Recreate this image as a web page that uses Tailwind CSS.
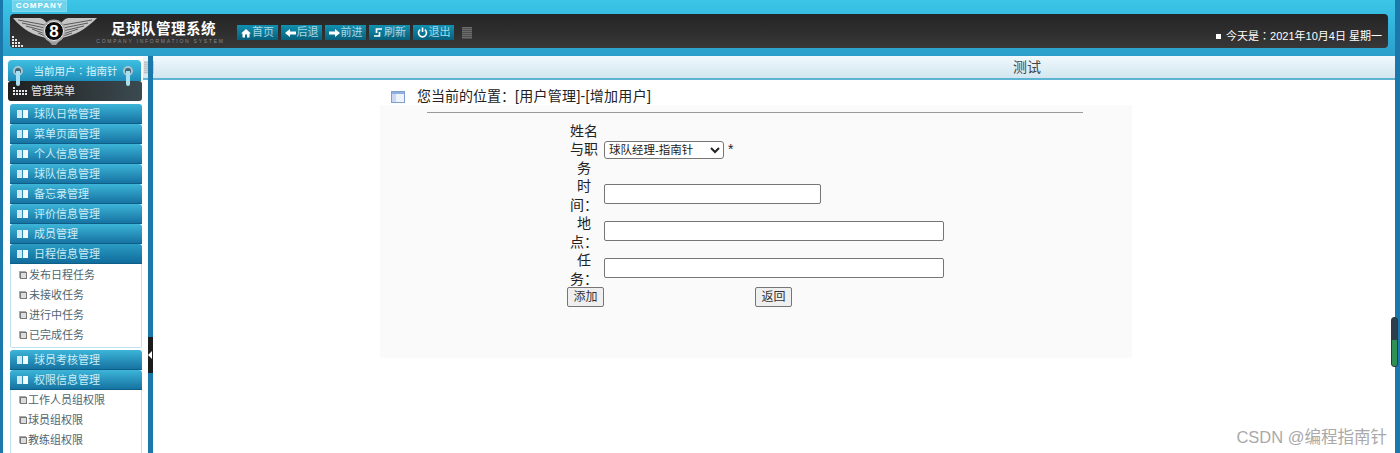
<!DOCTYPE html>
<html lang="zh">
<head>
<meta charset="utf-8">
<script src="https://cdn.jsdelivr.net/npm/@tailwindcss/browser@4"></script>
</head>
<body class="relative h-[453px] w-[1400px] overflow-hidden bg-white font-['Liberation_Sans','Noto_Sans_CJK_SC',sans-serif]">

<!-- Top header -->
<header class="h-[56px] border-l-[3px] border-r-[5px] border-[#1b78ad] bg-gradient-to-b from-[#3cc6e8] to-[#2a9fcb] pl-[7px] pr-[7px]">
  <div class="ml-[2px] flex h-[12px] w-[55px] items-center justify-center border border-[#7fdcf0] bg-[#6ed3ea] text-[8px] font-bold tracking-[1px] text-white">COMPANY</div>
  <div class="mt-[2px] flex h-[34px] items-center rounded-[4px] bg-gradient-to-b from-[#242424] to-[#383838] pr-[6px]">
    <div class="relative h-[34px] w-[88px] shrink-0">
      <svg class="absolute left-[2px] top-0" width="86" height="34" viewBox="0 0 86 34">
        <path d="M1 4 H28 C32 5 35 8 36 12 L35 24 C22 22 10 15 1 4Z" fill="#c4c4c4"/>
        <path d="M85 4 H56 C52 5 49 8 48 12 L49 24 C62 22 74 15 85 4Z" fill="#c4c4c4"/>
        <path d="M6 6 L33 11 M10 9 L33 14 M14 12 L33 17 M20 15 L33 20 M26 19 L33 22 M80 6 L51 11 M76 9 L51 14 M72 12 L51 17 M66 15 L51 20 M60 19 L51 22" stroke="#5a5a5a" stroke-width="1"/>
        <path d="M34 24 H50 L44 31 H40Z" fill="#9a9a9a"/>
        <circle cx="42" cy="17" r="11.5" fill="#a8a8a8"/>
        <circle cx="42" cy="17" r="9.5" fill="#0c0c0c" stroke="#eee" stroke-width="1"/>
        <text x="42" y="23" text-anchor="middle" font-family="Liberation Sans" font-size="17" font-weight="700" fill="#fff">8</text>
      </svg>
      <svg class="absolute left-[2px] top-[22px]" width="11" height="11" viewBox="0 0 11 11" fill="#e8e8e8">
        <rect x="0" y="0" width="2" height="2"/><rect x="0" y="3" width="2" height="2"/><rect x="3" y="3" width="2" height="2"/><rect x="0" y="6" width="2" height="2"/><rect x="3" y="6" width="2" height="2"/><rect x="6" y="6" width="2" height="2"/><rect x="0" y="9" width="2" height="2"/><rect x="3" y="9" width="2" height="2"/><rect x="6" y="9" width="2" height="2"/><rect x="9" y="9" width="2" height="2"/>
      </svg>
    </div>
    <div class="flex w-[125px] shrink-0 flex-col items-center pt-[2px]">
      <div class="ml-[6px] text-[14.5px] font-bold leading-[18px] tracking-[0.5px] text-white">足球队管理系统</div>
      <div class="whitespace-nowrap text-[5px] leading-[7px] tracking-[1.75px] text-[#8a8a8a]">COMPANY INFORMATION SYSTEM</div>
    </div>
    <nav class="ml-[14px] mt-[3px] flex items-center gap-[3px] text-[11px] text-[#a9d9e6]">
      <a class="flex h-[15px] w-[41px] items-center justify-center gap-[1px] bg-gradient-to-b from-[#1290b0] to-[#07617d]">
        <svg width="10" height="10" viewBox="0 0 10 10" fill="#fff"><path d="M5 1 L10 5.5 H8.5 V9.5 H6 V6.5 H4 V9.5 H1.5 V5.5 H0Z"/></svg>首页</a>
      <a class="flex h-[15px] w-[41px] items-center justify-center gap-[1px] bg-gradient-to-b from-[#1290b0] to-[#07617d]">
        <svg width="11" height="10" viewBox="0 0 11 10" fill="#fff"><path d="M0 5 L5 1 V3.5 H11 V6.5 H5 V9Z"/></svg>后退</a>
      <a class="flex h-[15px] w-[41px] items-center justify-center gap-[1px] bg-gradient-to-b from-[#1290b0] to-[#07617d]">
        <svg width="11" height="10" viewBox="0 0 11 10" fill="#fff"><path d="M11 5 L6 1 V3.5 H0 V6.5 H6 V9Z"/></svg>前进</a>
      <a class="flex h-[15px] w-[41px] items-center justify-center gap-[1px] bg-gradient-to-b from-[#1290b0] to-[#07617d]">
        <svg width="10" height="11" viewBox="0 0 10 11" fill="none" stroke="#fff" stroke-width="1.7"><path d="M9 2 H3.5 V6 M1 9 H6.5 V5"/></svg>刷新</a>
      <a class="flex h-[15px] w-[41px] items-center justify-center gap-[1px] bg-gradient-to-b from-[#1290b0] to-[#07617d]">
        <svg width="11" height="11" viewBox="0 0 11 11" fill="none" stroke="#fff" stroke-width="1.6"><path d="M3.2 2.6 A4 4 0 1 0 7.8 2.6 M5.5 0.5 V5"/></svg>退出</a>
      <span class="ml-[5px] block h-[12px] w-[10px] bg-[repeating-linear-gradient(to_bottom,#6c6c6c_0,#6c6c6c_1px,#4f4f4f_1px,#4f4f4f_2px)]"></span>
    </nav>
    <div class="ml-auto mt-[10px] flex items-center text-[11px] text-white">
      <span class="mr-[5px] block h-[5px] w-[5px] bg-white"></span>今天是<span class="font-['Liberation_Sans','Noto_Sans_CJK_TC',sans-serif]">：</span>2021年10月4日 星期一
    </div>
  </div>
</header>

<div class="flex h-[397px]">
  <!-- Sidebar -->
  <aside class="relative h-full w-[153px] shrink-0 border-l-[3px] border-r-[5px] border-[#1b78ad] pl-[5px] pr-[6px] pt-[4px]">
    <div class="relative flex h-[21px] w-[133px] items-center justify-center rounded-t-[4px] bg-gradient-to-b from-[#3fc0e2] to-[#1d8dba] pl-[2px] pt-[2px] text-[10.5px] text-[#d8f4fb]">当前用户<span class="font-['Liberation_Sans','Noto_Sans_CJK_TC',sans-serif]">：</span>指南针
      <span class="absolute left-[5px] top-[6px] h-[10px] w-[10px] rounded-full border-2 border-[#a9c4cf] bg-[#3b6577]"></span>
      <span class="absolute left-[8px] top-[11px] h-[15px] w-[4px] rounded-b-[2px] bg-[#a8e0f2]"></span>
      <span class="absolute left-[115px] top-[6px] h-[10px] w-[10px] rounded-full border-2 border-[#a9c4cf] bg-[#3b6577]"></span>
      <span class="absolute left-[118px] top-[11px] h-[15px] w-[4px] rounded-b-[2px] bg-[#a8e0f2]"></span>
    </div>
    <div class="flex h-[20px] w-[134px] items-center gap-[4px] rounded-[3px] bg-gradient-to-r from-[#1f1f1f] to-[#3b4a50] pl-[5px] text-[11px] text-[#e8e8e8]">
      <svg width="14" height="11" viewBox="0 0 14 11" fill="#e8e8e8"><rect x="0" y="1" width="2" height="2"/><rect x="0" y="4" width="2" height="2"/><rect x="0" y="7" width="2" height="2"/><rect x="3" y="4" width="2" height="2"/><rect x="3" y="7" width="2" height="2"/><rect x="6" y="4" width="2" height="2"/><rect x="6" y="7" width="2" height="2"/><rect x="9" y="4" width="2" height="2"/><rect x="9" y="7" width="2" height="2"/><rect x="12" y="4" width="2" height="2"/><rect x="12" y="7" width="2" height="2"/></svg>管理菜单
    </div>
    <div class="ml-[2px] mt-[3px] w-[132px] text-[11px]">
      <div class="flex flex-col">
        <div class="flex h-[20px] items-center gap-[6px] rounded-t-[3px] bg-gradient-to-b from-[#3db5d9] to-[#14709f] pl-[7px] text-[#c9edf7] shadow-[inset_0_-1px_0_#0d5f88]"><i class="block h-[8px] w-[11px] border-l-[5px] border-r-[5px] border-l-[#cfeaf4] border-r-[#f2fbfe] bg-[#2f8fb8]"></i>球队日常管理</div>
        <div class="flex h-[20px] items-center gap-[6px] rounded-t-[3px] bg-gradient-to-b from-[#3db5d9] to-[#14709f] pl-[7px] text-[#c9edf7] shadow-[inset_0_-1px_0_#0d5f88]"><i class="block h-[8px] w-[11px] border-l-[5px] border-r-[5px] border-l-[#cfeaf4] border-r-[#f2fbfe] bg-[#2f8fb8]"></i>菜单页面管理</div>
        <div class="flex h-[20px] items-center gap-[6px] rounded-t-[3px] bg-gradient-to-b from-[#3db5d9] to-[#14709f] pl-[7px] text-[#c9edf7] shadow-[inset_0_-1px_0_#0d5f88]"><i class="block h-[8px] w-[11px] border-l-[5px] border-r-[5px] border-l-[#cfeaf4] border-r-[#f2fbfe] bg-[#2f8fb8]"></i>个人信息管理</div>
        <div class="flex h-[20px] items-center gap-[6px] rounded-t-[3px] bg-gradient-to-b from-[#3db5d9] to-[#14709f] pl-[7px] text-[#c9edf7] shadow-[inset_0_-1px_0_#0d5f88]"><i class="block h-[8px] w-[11px] border-l-[5px] border-r-[5px] border-l-[#cfeaf4] border-r-[#f2fbfe] bg-[#2f8fb8]"></i>球队信息管理</div>
        <div class="flex h-[20px] items-center gap-[6px] rounded-t-[3px] bg-gradient-to-b from-[#3db5d9] to-[#14709f] pl-[7px] text-[#c9edf7] shadow-[inset_0_-1px_0_#0d5f88]"><i class="block h-[8px] w-[11px] border-l-[5px] border-r-[5px] border-l-[#cfeaf4] border-r-[#f2fbfe] bg-[#2f8fb8]"></i>备忘录管理</div>
        <div class="flex h-[20px] items-center gap-[6px] rounded-t-[3px] bg-gradient-to-b from-[#3db5d9] to-[#14709f] pl-[7px] text-[#c9edf7] shadow-[inset_0_-1px_0_#0d5f88]"><i class="block h-[8px] w-[11px] border-l-[5px] border-r-[5px] border-l-[#cfeaf4] border-r-[#f2fbfe] bg-[#2f8fb8]"></i>评价信息管理</div>
        <div class="flex h-[20px] items-center gap-[6px] rounded-t-[3px] bg-gradient-to-b from-[#3db5d9] to-[#14709f] pl-[7px] text-[#c9edf7] shadow-[inset_0_-1px_0_#0d5f88]"><i class="block h-[8px] w-[11px] border-l-[5px] border-r-[5px] border-l-[#cfeaf4] border-r-[#f2fbfe] bg-[#2f8fb8]"></i>成员管理</div>
        <div class="flex h-[20px] items-center gap-[6px] rounded-t-[3px] bg-gradient-to-b from-[#2a9cc4] to-[#0f6a9a] pl-[7px] text-[#c9edf7] shadow-[inset_0_-1px_0_#0d5f88]"><i class="block h-[8px] w-[11px] border-l-[5px] border-r-[5px] border-l-[#cfeaf4] border-r-[#f2fbfe] bg-[#2f8fb8]"></i>日程信息管理</div>
      </div>
      <ul class="h-[84px] rounded-b-[2px] border border-t-0 border-[#bfe3ef] pl-[9px] pt-[1px] text-[#4f6570]">
        <li class="flex h-[20px] items-center gap-[2px]"><i class="block h-[7px] w-[7px] border border-[#777] bg-[#ddd] shadow-[-1px_-1px_0_#aaa]"></i>发布日程任务</li>
        <li class="flex h-[20px] items-center gap-[2px]"><i class="block h-[7px] w-[7px] border border-[#777] bg-[#ddd] shadow-[-1px_-1px_0_#aaa]"></i>未接收任务</li>
        <li class="flex h-[20px] items-center gap-[2px]"><i class="block h-[7px] w-[7px] border border-[#777] bg-[#ddd] shadow-[-1px_-1px_0_#aaa]"></i>进行中任务</li>
        <li class="flex h-[20px] items-center gap-[2px]"><i class="block h-[7px] w-[7px] border border-[#777] bg-[#ddd] shadow-[-1px_-1px_0_#aaa]"></i>已完成任务</li>
      </ul>
      <div class="mt-[2px] flex h-[20px] items-center gap-[6px] rounded-t-[3px] bg-gradient-to-b from-[#3db5d9] to-[#14709f] pl-[7px] text-[#c9edf7] shadow-[inset_0_-1px_0_#0d5f88]"><i class="block h-[8px] w-[11px] border-l-[5px] border-r-[5px] border-l-[#cfeaf4] border-r-[#f2fbfe] bg-[#2f8fb8]"></i>球员考核管理</div>
      <div class="flex h-[20px] items-center gap-[6px] rounded-t-[3px] bg-gradient-to-b from-[#3db5d9] to-[#14709f] pl-[7px] text-[#c9edf7] shadow-[inset_0_-1px_0_#0d5f88]"><i class="block h-[8px] w-[11px] border-l-[5px] border-r-[5px] border-l-[#cfeaf4] border-r-[#f2fbfe] bg-[#2f8fb8]"></i>权限信息管理</div>
      <ul class="h-[63px] border-x border-[#bfe3ef] pl-[9px] text-[#4f6570]">
        <li class="flex h-[20px] items-center gap-[1px]"><i class="block h-[7px] w-[7px] border border-[#777] bg-[#ddd] shadow-[-1px_-1px_0_#aaa]"></i>工作人员组权限</li>
        <li class="flex h-[20px] items-center gap-[1px]"><i class="block h-[7px] w-[7px] border border-[#777] bg-[#ddd] shadow-[-1px_-1px_0_#aaa]"></i>球员组权限</li>
        <li class="flex h-[20px] items-center gap-[1px]"><i class="block h-[7px] w-[7px] border border-[#777] bg-[#ddd] shadow-[-1px_-1px_0_#aaa]"></i>教练组权限</li>
      </ul>
    </div>
    <!-- collapse handle -->
    <div class="absolute left-[145px] top-[281px] flex h-[36px] w-[5px] items-center bg-[#1c1c1c]">
      <span class="block h-0 w-0 border-y-[4px] border-r-[4px] border-y-transparent border-r-white"></span>
    </div>
  </aside>

  <!-- Main -->
  <main class="min-w-0 flex-1 border-r-[5px] border-[#1b78ad]">
    <div class="-ml-[10px] flex h-[24px] items-center border-b-2 border-[#5fb3d3] bg-gradient-to-b from-[#eff9fd] to-[#d3e6ef] pl-[1px]">
      <span class="block h-[13px] w-[10px] bg-[repeating-linear-gradient(to_bottom,#d5d5d5_0,#d5d5d5_1px,#b9c2c6_1px,#b9c2c6_2px)]"></span>
      <span class="ml-[859px] text-[14px] text-[#444]">测试</span>
    </div>
    <section class="relative">
      <div class="flex h-[25px] items-center pl-[238px] pt-[8px] text-[14px] text-[#222]">
        <svg width="14" height="12" viewBox="0 0 14 12"><rect x="0.5" y="0.5" width="13" height="11" fill="#eef3fb" stroke="#7f9fd0"/><rect x="1" y="1" width="12" height="2" fill="#8fb0e0"/><rect x="1" y="3" width="4" height="8" fill="#c9d8f0"/></svg>
        <span class="ml-[12px] whitespace-nowrap">您当前的位置<span class="font-['Liberation_Sans','Noto_Sans_CJK_TC',sans-serif]">：</span><span class="tracking-[0.3px]">[用户管理]-[增加用户]</span></span>
      </div>
      <div class="ml-[227px] h-[253px] w-[752px] bg-[#fafafa] pt-[7px]">
        <hr class="ml-[47px] w-[656px] border-t border-[#9a9a9a]">
        <div class="ml-[187px] mt-[9px] w-[570px] text-[14px] leading-[18.5px] text-[#222] [text-spacing-trim:space-all]">
          <div class="flex h-[55px] items-center">
            <label class="w-[34px] shrink-0 text-center">姓名与职务</label>
            <select class="ml-[3px] h-[18px] w-[120px] rounded-[3px] border border-[#767676] bg-white text-[11.5px] text-[#222]"><option>球队经理-指南针</option></select>
            <span class="ml-[4px]">*</span>
          </div>
          <div class="flex h-[37px] items-center">
            <label class="w-[34px] shrink-0 text-center">时<br>间<span class="font-['Liberation_Sans','Noto_Sans_CJK_TC',sans-serif]">：</span></label>
            <input class="mb-[4px] ml-[3px] h-[20px] w-[217px] rounded-[2px] border border-[#767676] bg-white">
          </div>
          <div class="flex h-[37px] items-center">
            <label class="w-[34px] shrink-0 text-center">地<br>点<span class="font-['Liberation_Sans','Noto_Sans_CJK_TC',sans-serif]">：</span></label>
            <input class="mb-[4px] ml-[3px] h-[20px] w-[340px] rounded-[2px] border border-[#767676] bg-white">
          </div>
          <div class="flex h-[37px] items-center">
            <label class="w-[34px] shrink-0 text-center">任<br>务<span class="font-['Liberation_Sans','Noto_Sans_CJK_TC',sans-serif]">：</span></label>
            <input class="mb-[4px] ml-[3px] h-[20px] w-[340px] rounded-[2px] border border-[#767676] bg-white">
          </div>
          <div class="-mt-[1px] flex gap-[151px]">
            <button class="h-[20px] w-[37px] rounded-[2px] border border-[#767676] bg-[#efefef] text-[12px] leading-none text-[#333]">添加</button>
            <button class="h-[20px] w-[37px] rounded-[2px] border border-[#767676] bg-[#efefef] text-[12px] leading-none text-[#333]">返回</button>
          </div>
        </div>
      </div>
    </section>
  </main>
</div>

<!-- Overlays -->
<div class="absolute left-[1391px] top-[317px] h-[50px] w-[7px] rounded-[3px] border border-[#2a3a40] bg-gradient-to-b from-[#2e3e4a] from-46% to-[#2f8f55] to-46%"></div>
<div class="absolute right-[13px] top-[428px] text-[16.5px] leading-[18px] text-[#a9a9a9]">CSDN @编程指南针</div>
</body>
</html>
